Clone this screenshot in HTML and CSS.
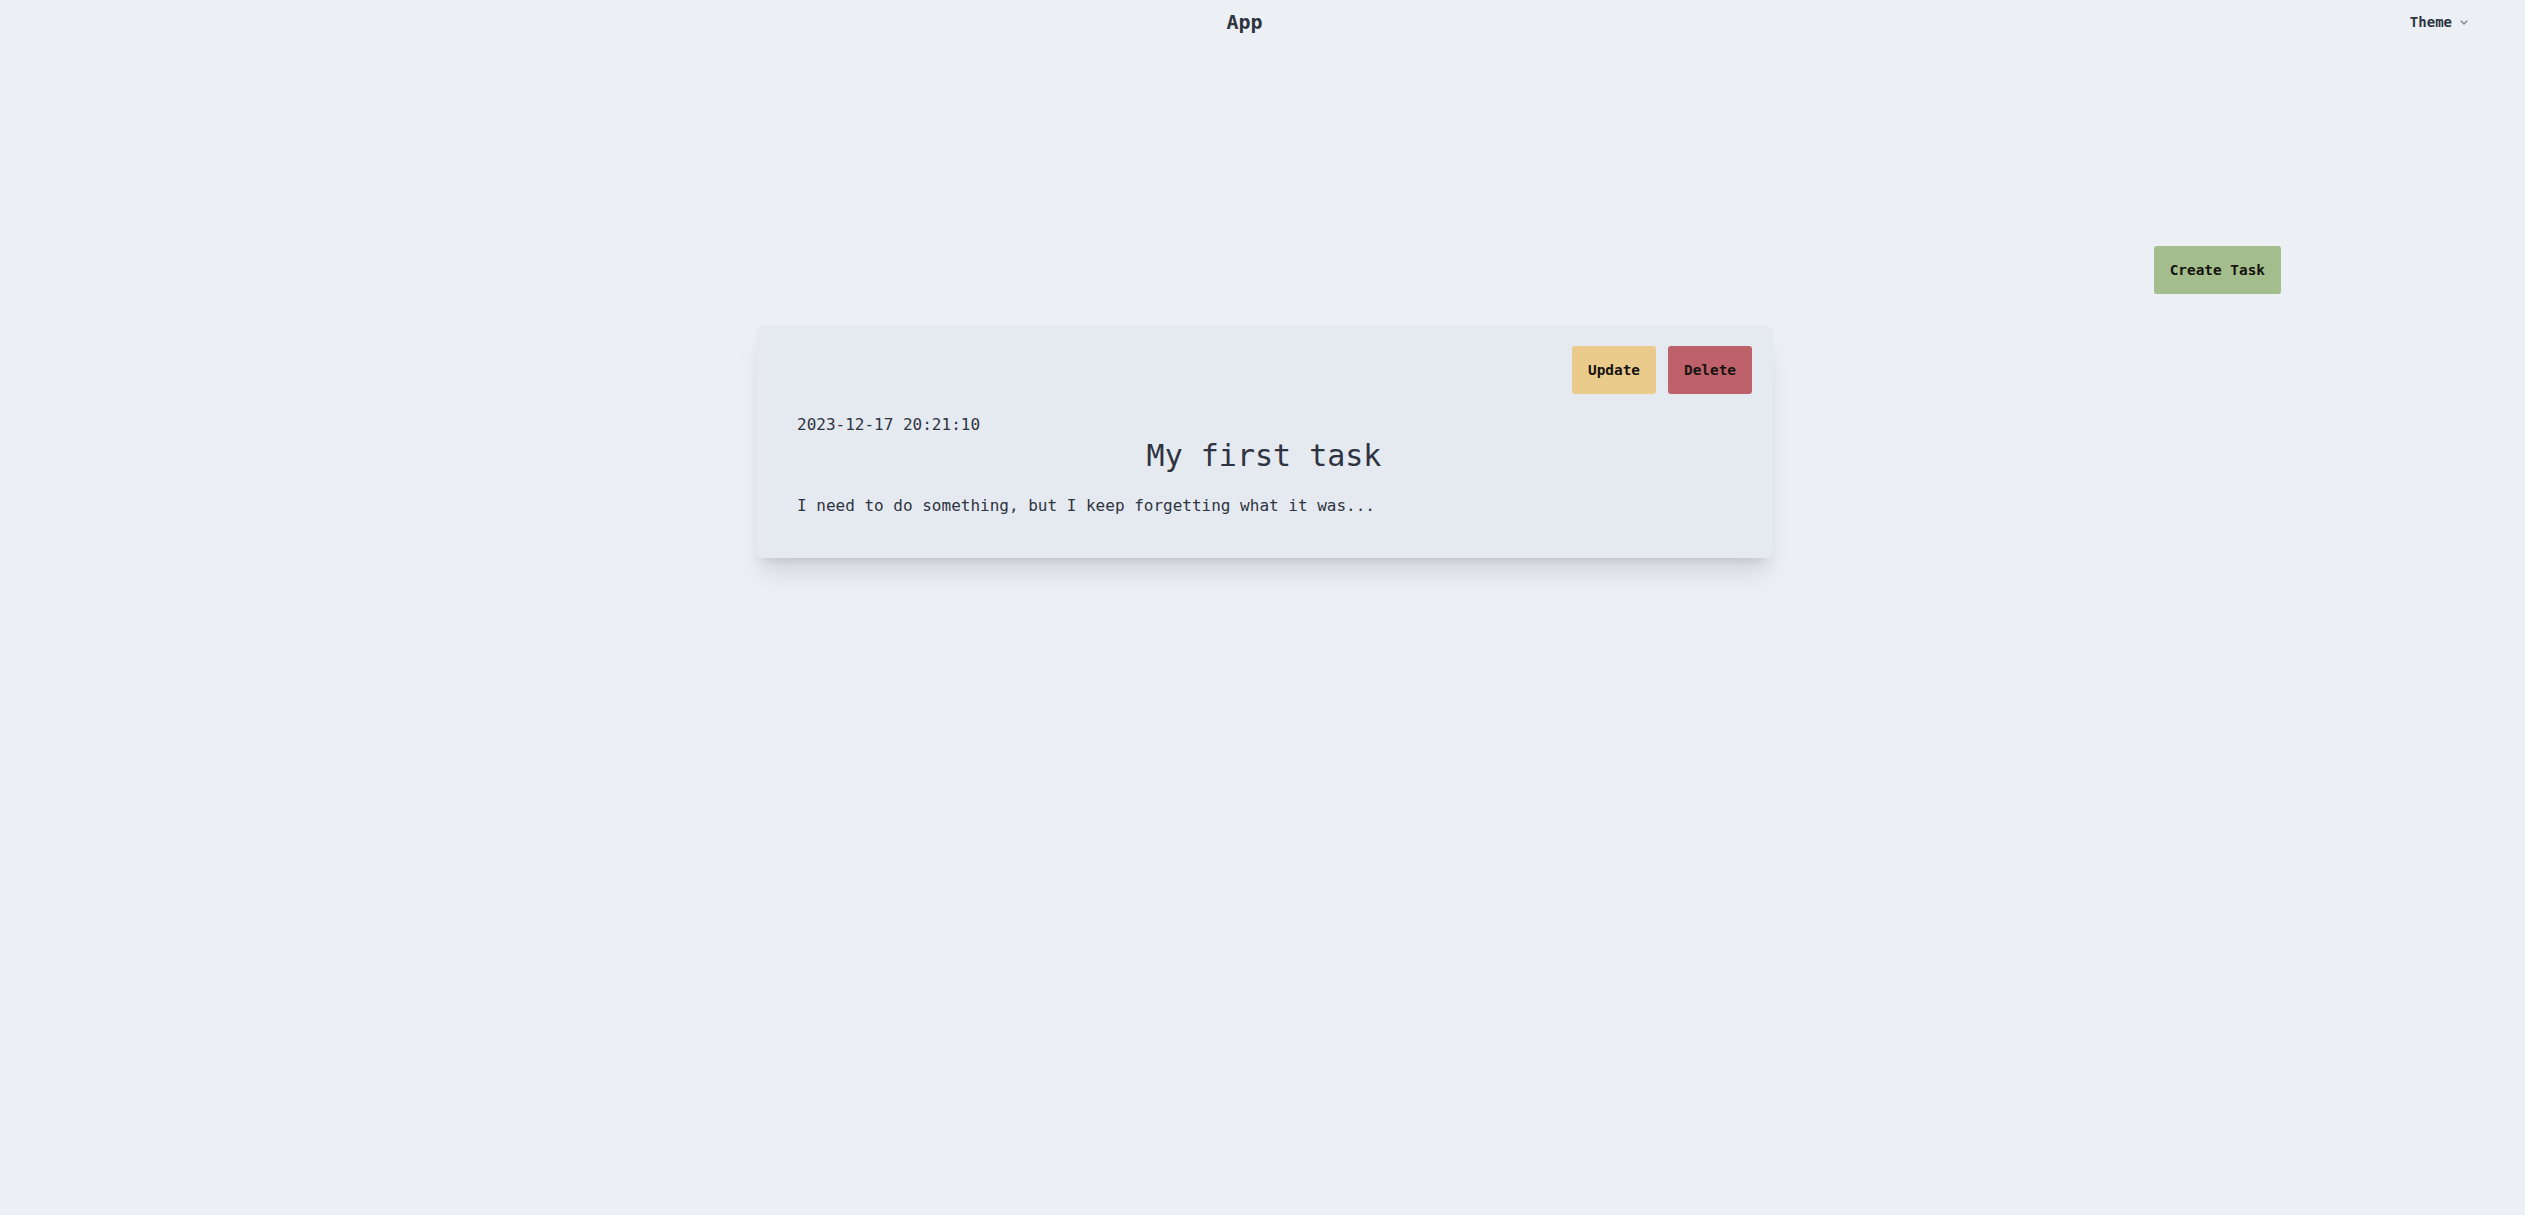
FILE: index.html
```html
<!DOCTYPE html>
<html lang="en">
<head>
<meta charset="utf-8">
<title>App</title>
<link rel="stylesheet" href="styles.css">
</head>
<body>
<header class="navbar">
  <div class="nav-side"></div>
  <div class="nav-title">App</div>
  <div class="nav-side nav-end">
    <button class="theme-btn">Theme
      <svg class="chev" width="8" height="5" viewBox="0 0 8 5"><path d="M0.8 0.8 L4 4 L7.2 0.8" fill="none" stroke="#7b808a" stroke-width="1.3"/></svg>
    </button>
  </div>
</header>
<main class="main">
  <div class="toolbar">
    <button class="btn btn-success">Create Task</button>
  </div>
  <div class="card">
    <div class="card-actions">
      <button class="btn btn-warning">Update</button>
      <button class="btn btn-error">Delete</button>
    </div>
    <div class="card-body">
      <div class="date">2023-12-17 20:21:10</div>
      <h2 class="title">My first task</h2>
      <p class="desc">I need to do something, but I keep forgetting what it was...</p>
    </div>
  </div>
</main>
</body>
</html>
```

FILE: styles.css
```css
html, body {
  margin: 0;
  padding: 0;
}
body {
  background: #eceff4;
  color: #2e3440;
  font-family: "DejaVu Sans Mono", "Liberation Mono", monospace;
  min-height: 1215px;
}
.navbar {
  display: grid;
  grid-template-columns: 1fr auto 1fr;
  align-items: center;
  height: 28px;
  padding-top: 8px;
}
.nav-title {
  font-size: 20px;
  line-height: 28px;
  font-weight: bold;
  margin-right: 36px;
}
.nav-end {
  display: flex;
  justify-content: flex-end;
  padding-right: 57px;
}
.theme-btn {
  background: none;
  border: 0;
  padding: 0;
  font-family: inherit;
  font-size: 14px;
  font-weight: bold;
  line-height: 20px;
  color: #2e3440;
  display: flex;
  align-items: center;
  gap: 8px;
}
.chev {
  display: block;
  margin-top: 1px;
}
.main {
  display: flex;
  flex-direction: column;
  align-items: center;
}
.toolbar {
  align-self: stretch;
  display: flex;
  justify-content: flex-end;
  padding-right: 244px;
  margin-top: 210px;
}
.btn {
  height: 48px;
  padding: 0 16px;
  border: 0;
  border-radius: 3px;
  font-family: inherit;
  font-size: 14.4px;
  font-weight: bold;
  color: #15130f;
  cursor: pointer;
}
.btn-success { background: #a3be8c; }
.btn-warning { background: #ebcb8b; }
.btn-error { background: #bf616a; }
.card {
  margin-top: 32px;
  margin-left: 4px;
  width: 1017px;
  box-sizing: border-box;
  background: #e5e9f0;
  border-radius: 6px;
  padding: 20px 21px 20px 20px;
  box-shadow: 0 20px 25px -5px rgba(0,0,0,0.1), 0 8px 10px -6px rgba(0,0,0,0.1);
}
.card-actions {
  display: flex;
  justify-content: flex-end;
  gap: 12px;
}
.card-body {
  padding: 19px 21px 20px 21px;
}
.date {
  font-size: 16px;
  line-height: 24px;
}
.title {
  margin: 1px 0 0;
  font-size: 30px;
  line-height: 36px;
  font-weight: normal;
  text-align: center;
}
.desc {
  margin: 20px 0 0;
  font-size: 16px;
  line-height: 24px;
}
```
